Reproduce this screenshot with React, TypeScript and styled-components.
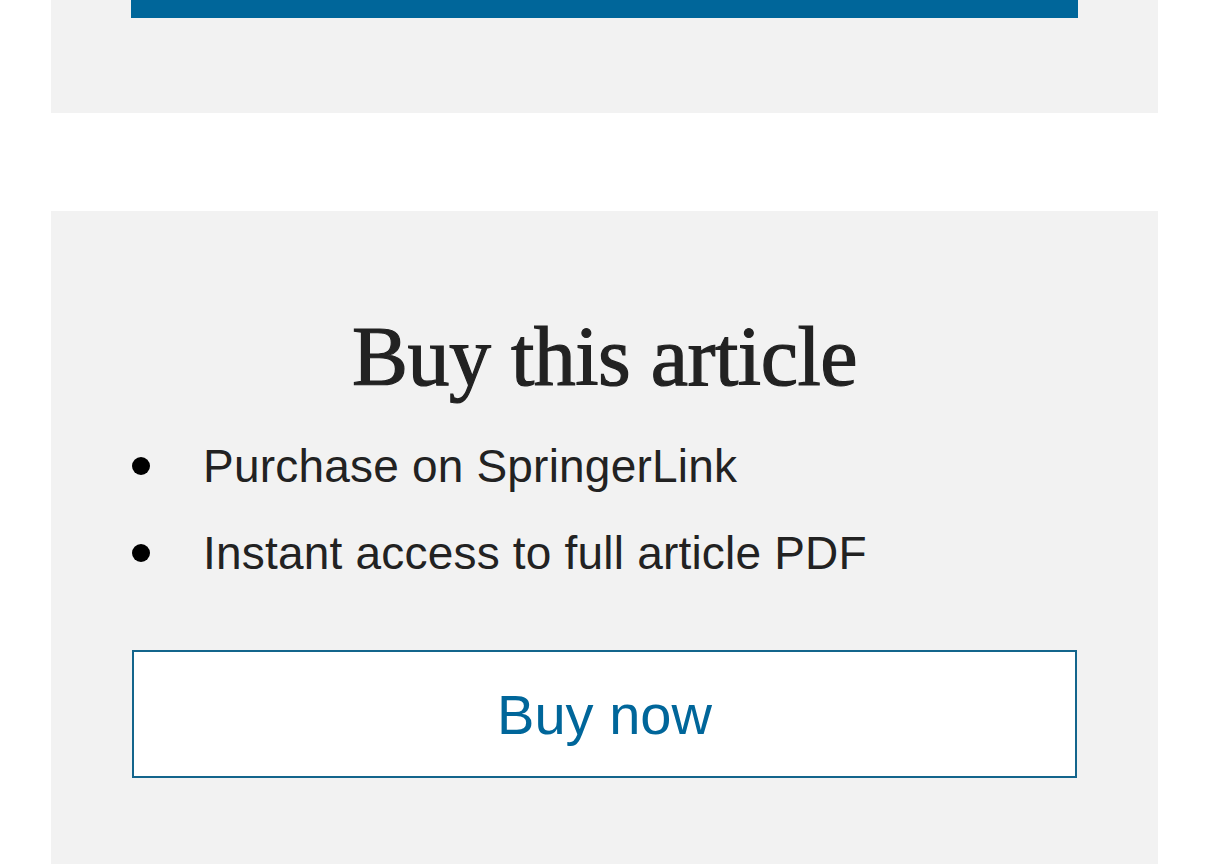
import React from "react";
import styled, { createGlobalStyle } from "styled-components";

const Global = createGlobalStyle`
  html, body { margin: 0; padding: 0; background: #ffffff; }
  body { font-family: "Liberation Sans", Arial, sans-serif; }
`;

const Page = styled.div`
  width: 1220px;
  height: 864px;
  overflow: hidden;
  padding: 0 62px 0 51px;
  box-sizing: border-box;
  display: flex;
  flex-direction: column;
  gap: 98px;
`;

const Card = styled.section<{ $top?: boolean }>`
  background: #f2f2f2;
  padding: ${(p) => (p.$top ? "0 80px 95px" : "96px 80px 80px")};
  display: flex;
  flex-direction: column;
  flex: ${(p) => (p.$top ? "none" : "1")};
`;

const BlueBar = styled.div`
  height: 18px;
  background: #00669a;
`;

const Title = styled.h2`
  margin: 0;
  font-family: "Liberation Serif", "Times New Roman", serif;
  font-weight: 400;
  font-size: 84px;
  line-height: 100px;
  color: #222222;
  text-align: center;
  letter-spacing: -0.5px;
  -webkit-text-stroke: 1.2px #222222;
`;

const List = styled.ul`
  list-style: none;
  margin: 32px 0 0;
  padding: 0;
  display: flex;
  flex-direction: column;
  gap: 33px;
`;

const Item = styled.li`
  display: flex;
  align-items: center;
  font-size: 46px;
  line-height: 54px;
  letter-spacing: 0.2px;
  color: #222222;
  &::before {
    content: "";
    width: 18px;
    height: 18px;
    border-radius: 50%;
    background: #000;
    margin: 0 53px 0 1px;
    flex: none;
  }
`;

const BuyButton = styled.button`
  margin: 70px 1px 0;
  height: 128px;
  background: #ffffff;
  border: 2px solid #13658c;
  color: #00669a;
  font-family: "Liberation Sans", Arial, sans-serif;
  font-size: 56px;
  display: flex;
  align-items: center;
  justify-content: center;
  cursor: pointer;
`;

export default function App() {
  return (
    <>
      <Global />
      <Page>
        <Card $top>
          <BlueBar />
        </Card>
        <Card>
          <Title>Buy this article</Title>
          <List>
            <Item>Purchase on SpringerLink</Item>
            <Item>Instant access to full article PDF</Item>
          </List>
          <BuyButton>Buy now</BuyButton>
        </Card>
      </Page>
    </>
  );
}
